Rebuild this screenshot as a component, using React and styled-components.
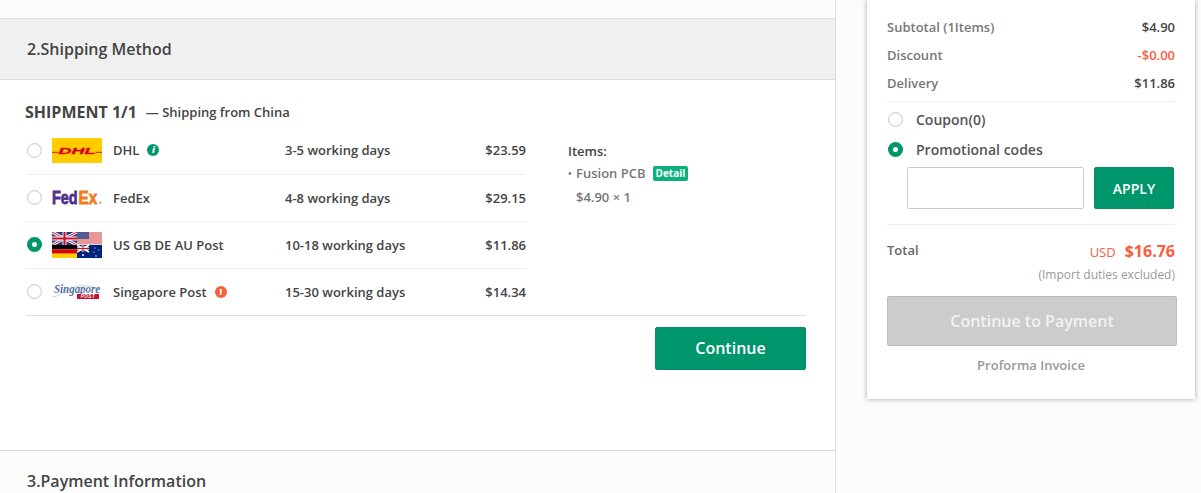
import React from "react";
import styled, { createGlobalStyle } from "styled-components";

const Global = createGlobalStyle`
  html, body { margin: 0; padding: 0; background: #fcfcfc; }
  body { font-family: "Open Sans", "Noto Sans", sans-serif; font-weight: 600; color: #444; }
  * { box-sizing: border-box; }
`;

const Page = styled.div`
  display: flex;
  width: 1201px;
  height: 493px;
  overflow: hidden;
  background: #fcfcfc;
`;
const Main = styled.main`
  width: 836px;
  flex: none;
  border-right: 1px solid #e0e0e0;
  display: flex;
  flex-direction: column;
`;
const TopStrip = styled.div`
  height: 19px;
  flex: none;
  border-bottom: 1px solid #ddd;
`;
const SectionHeader = styled.h2`
  margin: 0;
  height: 61px;
  flex: none;
  display: flex;
  align-items: center;
  padding-left: 27px;
  font-size: 16px;
  font-weight: 600;
  color: #444;
  background: #f0f0f0;
  border-bottom: 1px solid #ddd;
`;
const Body = styled.section`
  height: 371px;
  flex: none;
  background: #fff;
  padding: 20px 29px 0 26px;
  border-bottom: 1px solid #ddd;
`;
const Footer = styled.h2`
  margin: 0;
  padding: 19px 0 0 27px;
  font-size: 16px;
  line-height: 22px;
  font-weight: 600;
  color: #444;
  background: #fcfcfc;
`;
const ShipTitle = styled.div`
  display: flex;
  align-items: flex-start;
  gap: 9px;
  height: 22px;
  margin: 0 0 5px -1px;
`;
const ShipHeading = styled.span`
  margin-top: 1px;
  font-size: 16px;
  line-height: 22px;
  font-weight: 700;
  color: #444;
`;
const ShipNote = styled.span`
  margin-top: 1px;
  font-size: 13px;
  line-height: 22px;
  color: #444;
`;
const Columns = styled.div`
  display: flex;
  border-bottom: 1px solid #ddd;
`;
const Methods = styled.div`
  width: 500px;
  flex: none;
`;
const Method = styled.div`
  display: grid;
  grid-template-columns: 26px 61px 172px 1fr auto;
  align-items: center;
  height: 46.95px;
  font-size: 13px;
  color: #444;
  & + & { border-top: 1px solid #eee; }
`;
const Radio = styled.span`
  width: 15px;
  height: 15px;
  flex: none;
  border-radius: 50%;
  display: block;
  background: #fff;
  border: ${p => (p.$on ? "5px solid #00966c" : "1px solid #ccc")};
  ${p => !p.$on && "box-shadow: inset 0 0 1px #ccc;"}
`;
const MethodRadio = styled(Radio)`
  margin-left: 1px;
`;
const LogoBox = styled.svg`
  display: block;
  width: 50px;
  height: ${p => p.$h || 25}px;
`;
const NameCell = styled.span`
  display: flex;
  align-items: center;
  gap: 8px;
`;
const Days = styled.span``;
const Price = styled.span`
  text-align: right;
`;
const Badge = styled.span`
  width: 12px;
  height: 12px;
  border-radius: 50%;
  display: inline-flex;
  align-items: center;
  justify-content: center;
  background: ${p => p.$bg};
  color: #fff;
  font-size: 9px;
  line-height: 12px;
  font-weight: 800;
  font-style: ${p => (p.$italic ? "italic" : "normal")};
`;
const Items = styled.div`
  margin-left: 42px;
  padding-top: 14px;
  font-size: 13px;
`;
const ItemsTitle = styled.div`
  line-height: 20px;
  color: #444;
`;
const ItemRow = styled.div`
  display: flex;
  align-items: center;
  line-height: 24px;
  color: #777;
`;
const Bullet = styled.span`
  width: 8px;
  font-size: 10px;
`;
const DetailTag = styled.span`
  margin-left: 7px;
  padding: 0 3px;
  height: 15px;
  line-height: 15px;
  border-radius: 2px;
  background: #0cb07f;
  color: #fff;
  font-size: 10px;
  font-weight: 700;
`;
const ItemPrice = styled.div`
  padding-left: 8px;
  line-height: 24px;
  color: #777;
`;
const Actions = styled.div`
  display: flex;
  justify-content: flex-end;
  padding-top: 11px;
`;
const ContinueBtn = styled.button`
  width: 151px;
  height: 43px;
  border: 1px solid #0a8a65;
  border-radius: 2px;
  background: #00966c;
  color: #fff;
  font: 600 16px "Open Sans", sans-serif;
`;
const Aside = styled.aside`
  flex: 1;
  padding-left: 31px;
`;
const Card = styled.div`
  width: 328px;
  height: 399px;
  display: flex;
  flex-direction: column;
  background: #fff;
  padding: 13px 20px 0;
  box-shadow: 0 0 5px rgba(0, 0, 0, 0.35);
`;
const SumRow = styled.div`
  display: flex;
  justify-content: space-between;
  align-items: center;
  height: 28px;
  font-size: 13px;
  color: #777;
`;
const SumValue = styled.span`
  color: ${p => p.$color || "#444"};
`;
const Rule = styled.div`
  height: 1px;
  flex: none;
  background: #eee;
  margin-top: ${p => p.$top}px;
`;
const OptionRow = styled.div`
  display: flex;
  align-items: center;
  gap: 13px;
  height: 30px;
  margin-top: ${p => p.$top || 0}px;
  font-size: 14px;
  color: #555;
`;
const OptionRadio = styled(Radio)`
  margin-left: 1px;
`;
const PromoRow = styled.div`
  display: flex;
  gap: 10px;
  padding-left: 20px;
  margin-top: 3px;
`;
const PromoInput = styled.input`
  width: 177px;
  height: 42px;
  border: 1px solid #ccc;
  border-radius: 2px;
  background: #fff;
  outline: none;
`;
const ApplyBtn = styled.button`
  width: 80px;
  height: 42px;
  border: 1px solid #0a8a65;
  border-radius: 2px;
  background: #00966c;
  color: #fff;
  font: 600 14px "Open Sans", sans-serif;
`;
const TotalRow = styled.div`
  display: flex;
  justify-content: space-between;
  align-items: center;
  height: 24px;
  margin-top: 14px;
  font-size: 13px;
  color: #666;
`;
const TotalLabel = styled.span`
  margin-top: -2px;
`;
const TotalAmount = styled.span`
  display: flex;
  align-items: baseline;
  gap: 9px;
  color: #ff5a3c;
`;
const Usd = styled.span`
  font-size: 13px;
  font-weight: 500;
`;
const Big = styled.span`
  font-size: 16px;
  font-weight: 700;
`;
const Duties = styled.div`
  margin-top: 3px;
  text-align: right;
  font-size: 12px;
  line-height: 17px;
  font-weight: 400;
  color: #999;
`;
const PayBtn = styled.button`
  margin-top: 13px;
  width: 290px;
  height: 50px;
  flex: none;
  border: 1px solid #bbb;
  border-radius: 2px;
  background: #ccc;
  color: #f2f2f2;
  font: 600 16px "Open Sans", sans-serif;
`;
const Proforma = styled.div`
  margin-top: 10px;
  text-align: center;
  font-size: 13px;
  line-height: 18px;
  color: #999;
`;

const DhlLogo = () => (
  <LogoBox viewBox="0 0 50 25">
    <rect width="50" height="25" fill="#ffcc00" />
    <g fill="#d40511">
      <rect x="0" y="13.8" width="6.5" height="1.2" opacity=".75" />
      <rect x="43.5" y="13.8" width="6.5" height="1.2" opacity=".75" />
      <text x="25" y="16.3" textAnchor="middle" fontFamily="Liberation Sans" fontWeight="700" fontStyle="italic" fontSize="9.5" stroke="#d40511" strokeWidth=".35" textLength="37" lengthAdjust="spacingAndGlyphs">DHL</text>
    </g>
  </LogoBox>
);
const FedexLogo = () => (
  <LogoBox viewBox="0 0 50 25">
    <text transform="translate(0 19) scale(.76 1)" fontFamily="Liberation Sans" fontWeight="700" fontSize="19" fill="#4d2f8e" stroke="#4d2f8e" strokeWidth=".8">Fed</text>
    <text transform="translate(26.5 19) scale(.8 1)" fontFamily="Liberation Sans" fontWeight="700" fontSize="19" fill="#f07c22" stroke="#f07c22" strokeWidth=".8">Ex</text>
    <circle cx="48.4" cy="17.8" r="1.3" fill="#f4a56a" />
  </LogoBox>
);
const FlagsLogo = () => (
  <LogoBox $h={26} viewBox="0 0 50 26" preserveAspectRatio="none">
    <rect width="25" height="13" fill="#27367a" />
    <path d="M0 0L25 13M25 0L0 13" stroke="#fff" strokeWidth="3" />
    <path d="M0 0L25 13M25 0L0 13" stroke="#c8102e" strokeWidth="1" />
    <path d="M12.5 0V13M0 6.5H25" stroke="#fff" strokeWidth="4" />
    <path d="M12.5 0V13M0 6.5H25" stroke="#c8102e" strokeWidth="2.2" />
    <rect x="25" width="25" height="13" fill="#f3c9c9" />
    <path d="M25 1H50M25 3H50M25 5H50M25 7H50M25 9H50M25 11H50" stroke="#d66" strokeWidth="1" />
    <rect x="25" width="12" height="7" fill="#58598f" />
    <rect y="13" width="25" height="4.3" fill="#000" />
    <rect y="17.3" width="25" height="4.4" fill="#d00" />
    <rect y="21.7" width="25" height="4.3" fill="#ffce00" />
    <rect x="25" y="13" width="25" height="13" fill="#00247d" />
    <path d="M25 13L37 20M37 13L25 20" stroke="#fff" strokeWidth="1.6" />
    <path d="M31 13V20M25 16.5H37" stroke="#fff" strokeWidth="2.4" />
    <path d="M31 13V20M25 16.5H37" stroke="#c8102e" strokeWidth="1.2" />
    <g fill="#fff">
      <circle cx="31" cy="23" r="1" /><circle cx="43" cy="16" r=".6" /><circle cx="47" cy="18" r=".6" /><circle cx="42" cy="20" r=".6" /><circle cx="44" cy="24" r=".7" />
    </g>
  </LogoBox>
);
const SgLogo = () => (
  <LogoBox viewBox="0 0 50 25">
    <path d="M0 18C8 18 14 10 24 7.5C32 6 40 7 49 11" fill="none" stroke="#c9d3e4" strokeWidth="1" />
    <text transform="translate(2 13.5) scale(.95 1)" fontFamily="Liberation Serif" fontStyle="italic" fontSize="11.5" fill="#56739f">Singapore</text>
    <rect x="25" y="15" width="22" height="5" fill="#c4122f" />
    <text x="36" y="19.4" textAnchor="middle" fontFamily="Liberation Sans" fontWeight="700" fontStyle="italic" fontSize="4.5" fill="#fff" letterSpacing=".6">POST</text>
  </LogoBox>
);

const methods = [
  { logo: <DhlLogo />, name: "DHL", days: "3-5 working days", price: "$23.59", badge: <Badge $bg="#00966c" $italic>i</Badge> },
  { logo: <FedexLogo />, name: "FedEx", days: "4-8 working days", price: "$29.15" },
  { logo: <FlagsLogo />, name: "US GB DE AU Post", days: "10-18 working days", price: "$11.86", on: true },
  { logo: <SgLogo />, name: "Singapore Post", days: "15-30 working days", price: "$14.34", badge: <Badge $bg="#f4613a">!</Badge> },
];

export default function App() {
  return (
    <>
      <Global />
      <Page>
        <Main>
          <TopStrip />
          <SectionHeader>2.Shipping Method</SectionHeader>
          <Body>
            <ShipTitle>
              <ShipHeading>SHIPMENT 1/1</ShipHeading>
              <ShipNote>— Shipping from China</ShipNote>
            </ShipTitle>
            <Columns>
              <Methods>
                {methods.map(m => (
                  <Method key={m.name}>
                    <MethodRadio $on={m.on} />
                    {m.logo}
                    <NameCell>{m.name}{m.badge}</NameCell>
                    <Days>{m.days}</Days>
                    <Price>{m.price}</Price>
                  </Method>
                ))}
              </Methods>
              <Items>
                <ItemsTitle>Items:</ItemsTitle>
                <ItemRow><Bullet>•</Bullet>Fusion PCB<DetailTag>Detail</DetailTag></ItemRow>
                <ItemPrice>$4.90 × 1</ItemPrice>
              </Items>
            </Columns>
            <Actions><ContinueBtn>Continue</ContinueBtn></Actions>
          </Body>
          <Footer>3.Payment Information</Footer>
        </Main>
        <Aside>
          <Card>
            <SumRow><span>Subtotal (1Items)</span><SumValue>$4.90</SumValue></SumRow>
            <SumRow><span>Discount</span><SumValue $color="#ff5a3c">-$0.00</SumValue></SumRow>
            <SumRow><span>Delivery</span><SumValue>$11.86</SumValue></SumRow>
            <Rule $top={4} />
            <OptionRow $top={2}><OptionRadio />Coupon(0)</OptionRow>
            <OptionRow><OptionRadio $on />Promotional codes</OptionRow>
            <PromoRow>
              <PromoInput />
              <ApplyBtn>APPLY</ApplyBtn>
            </PromoRow>
            <Rule $top={15} />
            <TotalRow>
              <TotalLabel>Total</TotalLabel>
              <TotalAmount><Usd>USD</Usd><Big>$16.76</Big></TotalAmount>
            </TotalRow>
            <Duties>(Import duties excluded)</Duties>
            <PayBtn>Continue to Payment</PayBtn>
            <Proforma>Proforma Invoice</Proforma>
          </Card>
        </Aside>
      </Page>
    </>
  );
}
